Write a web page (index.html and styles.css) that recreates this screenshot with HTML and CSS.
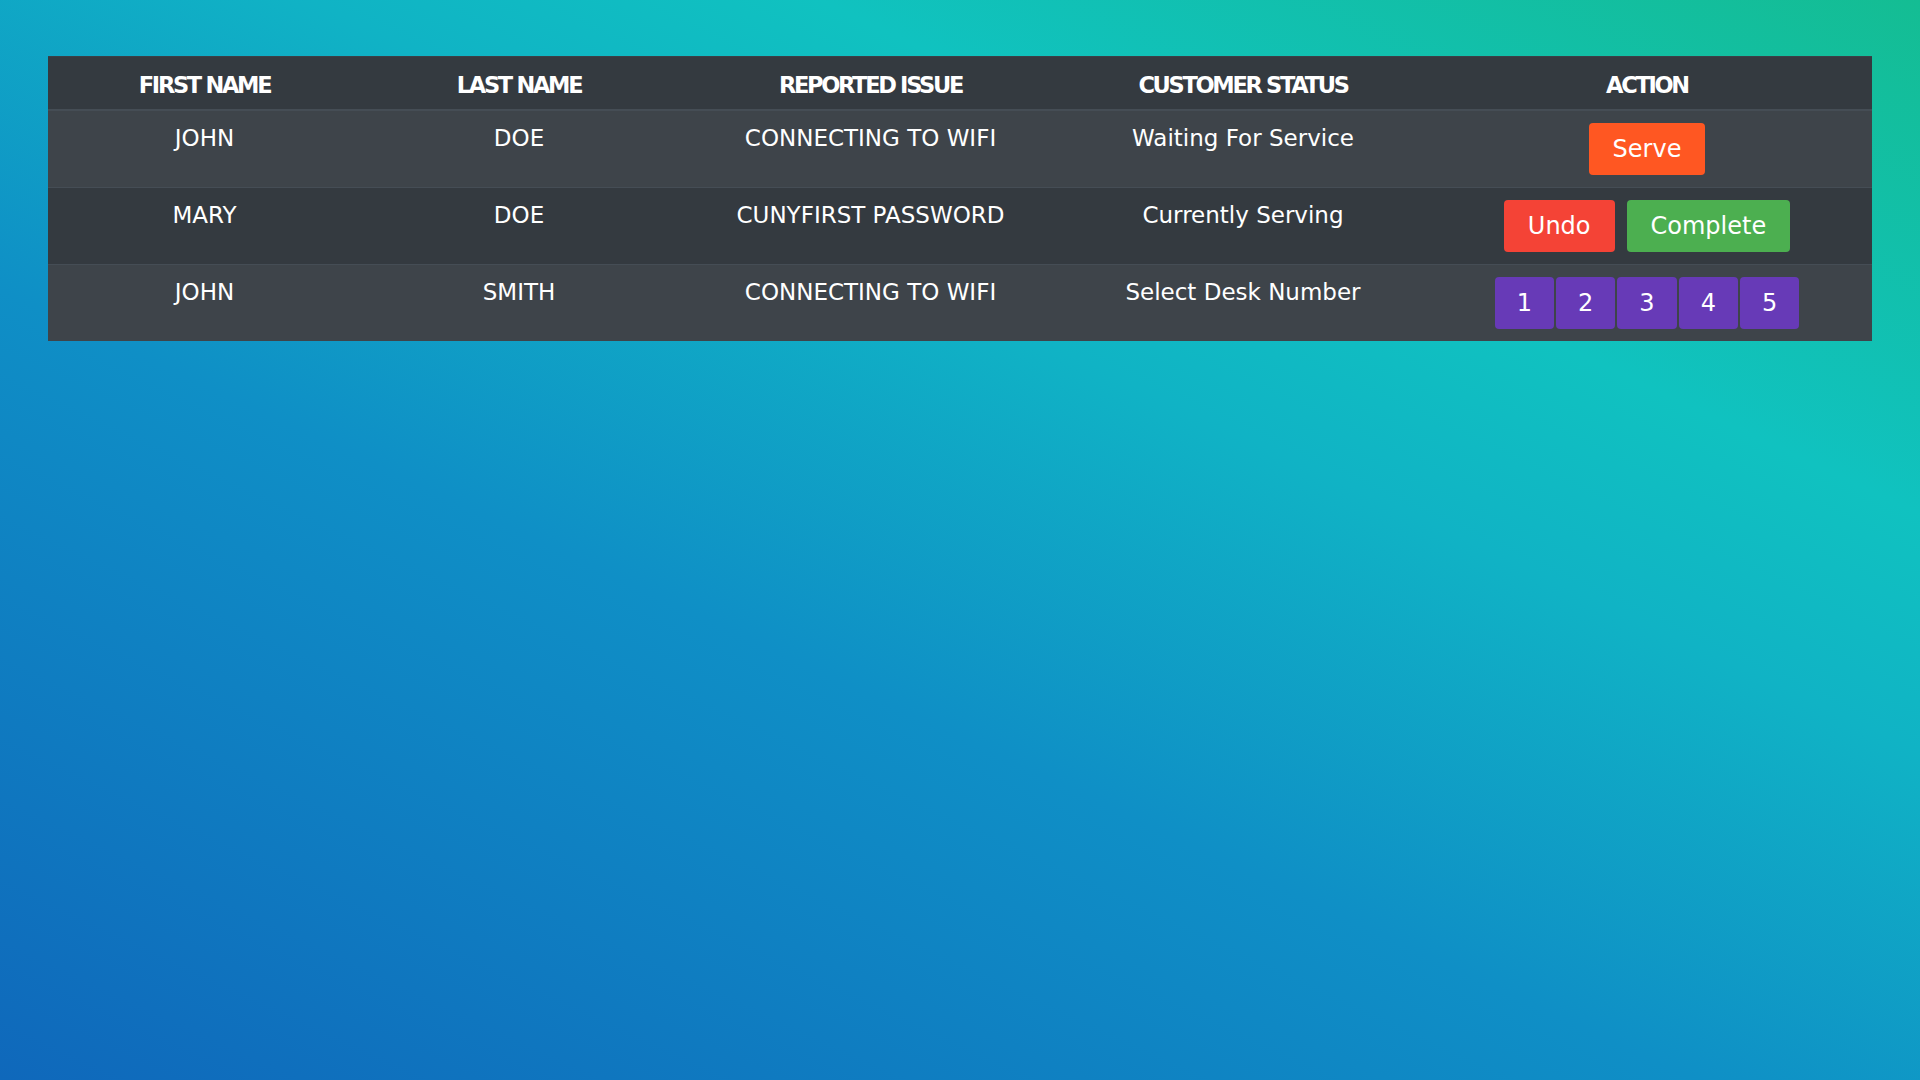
FILE: index.html
```html
<!DOCTYPE html>
<html lang="en">
<head>
<meta charset="utf-8">
<title>Queue</title>
<link rel="stylesheet" href="styles.css">
</head>
<body>
<main class="page">
  <table class="queue">
    <colgroup>
      <col class="c-first">
      <col class="c-last">
      <col class="c-issue">
      <col class="c-status">
      <col class="c-action">
    </colgroup>
    <thead>
      <tr>
        <th>FIRST NAME</th>
        <th>LAST NAME</th>
        <th>REPORTED ISSUE</th>
        <th>CUSTOMER STATUS</th>
        <th>ACTION</th>
      </tr>
    </thead>
    <tbody>
      <tr class="odd">
        <td>JOHN</td>
        <td>DOE</td>
        <td>CONNECTING TO WIFI</td>
        <td>Waiting For Service</td>
        <td>
          <div class="actions">
            <button class="btn btn-serve">Serve</button>
          </div>
        </td>
      </tr>
      <tr>
        <td>MARY</td>
        <td>DOE</td>
        <td>CUNYFIRST PASSWORD</td>
        <td>Currently Serving</td>
        <td>
          <div class="actions">
            <button class="btn btn-undo">Undo</button>
            <button class="btn btn-complete">Complete</button>
          </div>
        </td>
      </tr>
      <tr class="odd">
        <td>JOHN</td>
        <td>SMITH</td>
        <td>CONNECTING TO WIFI</td>
        <td>Select Desk Number</td>
        <td>
          <div class="actions desks">
            <button class="btn btn-desk">1</button>
            <button class="btn btn-desk">2</button>
            <button class="btn btn-desk">3</button>
            <button class="btn btn-desk">4</button>
            <button class="btn btn-desk">5</button>
          </div>
        </td>
      </tr>
    </tbody>
  </table>
</main>
</body>
</html>
```

FILE: styles.css
```css
html, body {
  margin: 0;
  padding: 0;
  height: 100%;
}

body {
  font-family: "DejaVu Sans", "Liberation Sans", sans-serif;
  color: #ffffff;
  background: linear-gradient(25deg, #0f68bb 0%, #0f8fc6 40%, #10b3c5 62%, #10c2c0 74%, #14bd93 100%);
  background-attachment: fixed;
  min-height: 100vh;
}

.page {
  padding: 56px 48px 0;
}

.queue {
  width: 1824px;
  border-collapse: collapse;
  table-layout: fixed;
  background: #343a40;
  text-align: center;
}

.c-first { width: 313px; }
.c-last { width: 316px; }
.c-issue { width: 387px; }
.c-status { width: 358px; }
.c-action { width: 450px; }

.queue th {
  font-weight: bold;
  font-size: 22.5px;
  letter-spacing: -2.3px;
  line-height: 26px;
  padding: 15px 12px 11px;
  border-top: 1px solid #3a4047;
  border-bottom: 2px solid #454d55;
  white-space: nowrap;
}

.queue td {
  font-size: 23px;
  line-height: 28px;
  padding: 13px 12px 12px;
  border-top: 1px solid #454d55;
  vertical-align: top;
  white-space: nowrap;
}

.queue tbody tr.odd {
  background: #3e444a;
}

.actions {
  display: flex;
  justify-content: center;
  gap: 12px;
  margin-top: -1px;
}

.actions.desks {
  gap: 2px;
}

.btn {
  font-family: "DejaVu Sans", "Liberation Sans", sans-serif;
  font-size: 24px;
  line-height: 36px;
  padding: 8px 24px;
  border: none;
  border-radius: 4px;
  color: #ffffff;
  cursor: pointer;
}

.btn-serve { background: #ff5722; }
.btn-undo { background: #f44336; }
.btn-complete { background: #4caf50; }
.btn-desk {
  background: #673ab7;
  padding: 8px 22px;
}
```
